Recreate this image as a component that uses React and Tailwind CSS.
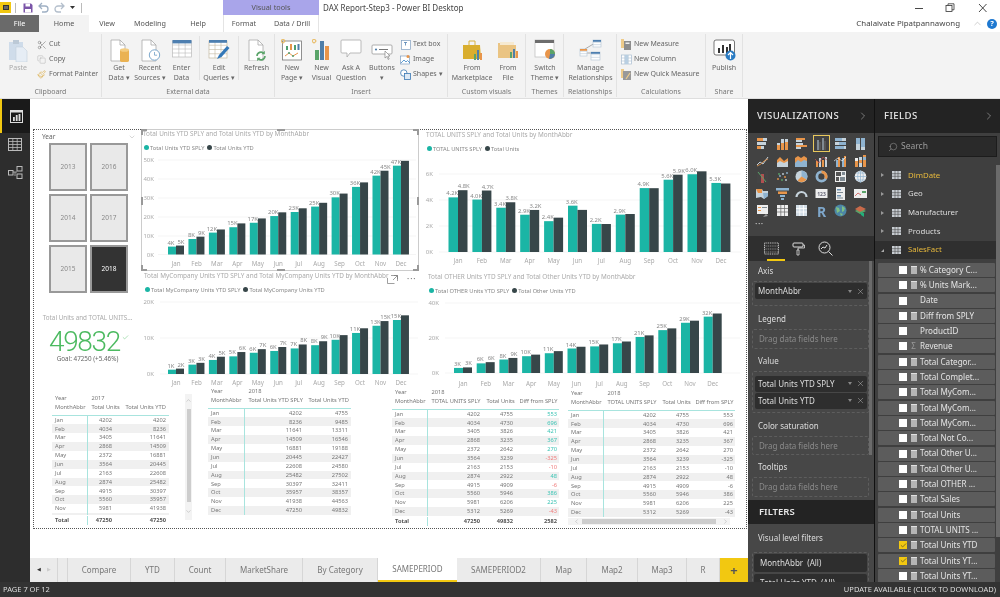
import React from "react";
import { Scissors, Copy, Paintbrush, X, ChevronRight, ChevronUp, ChevronDown, Search, Check } from "lucide-react";

const Svg = ({ w, h, vb, children, cls = "" }) => (
  <svg width={w} height={h} viewBox={vb || `0 0 ${w} ${h}`} className={`block shrink-0 ${cls}`}>{children}</svg>
);
const Sheet = () => (
  <>
    <path d="M2 1h9l5 5v16H2z" fill="#fff" stroke="#aaa" strokeWidth=".8" />
    <path d="M11 1v5h5" fill="none" stroke="#aaa" strokeWidth=".8" />
  </>
);
const Sun = ({ x = 0, y = 0 }) => (
  <g transform={`translate(${x} ${y})`}>
    <circle cx="3" cy="3" r="1.6" fill="none" stroke="#e8b85c" strokeWidth=".9" />
    <path d="M3 0v1M3 5v1M0 3h1M5 3h1M1 1l.6.6M4.4 4.4l.6.6M1 5l.6-.6M4.4 1.6L5 1" stroke="#e8b85c" strokeWidth=".6" />
  </g>
);
const Grid = ({ x, y, w, h, c = "#bbb", rows = 4, cols = 3 }) => (
  <g>
    <rect x={x} y={y} width={w} height={h} fill="#fff" stroke={c} strokeWidth=".7" />
    {Array.from({ length: rows - 1 }, (_, i) => (
      <path key={i} d={`M${x} ${y + ((i + 1) * h) / rows}h${w}`} stroke={c} strokeWidth=".6" />
    ))}
    {Array.from({ length: cols - 1 }, (_, i) => (
      <path key={i} d={`M${x + ((i + 1) * w) / cols} ${y}v${h}`} stroke={c} strokeWidth=".6" />
    ))}
  </g>
);

const RI = {
  paste: (
    <Svg w={20} h={23}>
      <rect x="1" y="3" width="14" height="18" fill="#cfdcea" />
      <rect x="5" y="1" width="6" height="4" fill="#bcc9d6" />
      <path d="M8 8h7l4 4v11H8z" fill="#e6edf5" stroke="#c5d0dc" strokeWidth=".6" />
    </Svg>
  ),
  getData: (
    <Svg w={21} h={23}>
      <Sheet />
      <rect x="11" y="11" width="9" height="11" fill="#eab252" />
      <ellipse cx="15.5" cy="11" rx="4.5" ry="1.8" fill="#f3cc80" />
      <ellipse cx="15.5" cy="22" rx="4.5" ry="1.2" fill="#eab252" />
    </Svg>
  ),
  recent: (
    <Svg w={21} h={23}>
      <Sheet />
      <circle cx="14.5" cy="16" r="5.2" fill="#fff" stroke="#6f9fc6" strokeWidth=".9" />
      <path d="M14.5 13v3.2h2.6" fill="none" stroke="#6f9fc6" strokeWidth=".8" />
    </Svg>
  ),
  enter: (
    <Svg w={20} h={19}>
      <Grid x={.5} y={2} w={19} h={16} />
      <rect x=".5" y="1" width="19" height="3.4" fill="#4e7fb0" />
    </Svg>
  ),
  edit: (
    <Svg w={22} h={22}>
      <Grid x={1} y={2} w={18} h={17} c="#c3b9a2" />
      <rect x="1" y="1" width="18" height="2.8" fill="#4e7fb0" />
      <path d="M9 20l2-4 8-9 2.5 2-8 9z" fill="#3478b8" />
    </Svg>
  ),
  refresh: (
    <Svg w={19} h={22}>
      <Sheet />
      <path d="M10 17a4 4 0 0 1 7-2.5M18 17a4 4 0 0 1-7 2.5" fill="none" stroke="#5aa469" strokeWidth="1.6" />
      <path d="M17.8 11.8v3.4h-3.4zM10.2 22.2v-3.4h3.4z" fill="#5aa469" />
    </Svg>
  ),
  newPage: (
    <Svg w={22} h={22}>
      <rect x="1.5" y="2" width="19" height="19" fill="#fff" stroke="#777" strokeWidth=".8" />
      <rect x="5" y="7" width="2" height="4" fill="#4f9e70" /><rect x="9" y="5" width="2" height="6" fill="#e8954a" /><rect x="13" y="6" width="2" height="5" fill="#4f9e70" /><rect x="16.5" y="5" width="2" height="6" fill="#4f7ea8" />
      <path d="M4 17l4-3 4 3 5-3" fill="none" stroke="#e8954a" strokeWidth="1" />
      <circle cx="8" cy="14" r="1" fill="#4f9e70" /><circle cx="12" cy="17" r="1" fill="#4f9e70" />
      <Sun x={-1} y={-1} />
    </Svg>
  ),
  newVisual: (
    <Svg w={19} h={22}>
      <rect x="3" y="11" width="4" height="10" fill="#5aa469" />
      <rect x="8" y="2" width="4" height="19" fill="#4f7ea8" />
      <rect x="13" y="7" width="4" height="14" fill="#e8954a" />
      <Sun x={-1} y={-1} />
    </Svg>
  ),
  ask: (
    <Svg w={22} h={20}>
      <path d="M2 1h18a1 1 0 0 1 1 1v11a1 1 0 0 1-1 1H10l-3 4v-4H2a1 1 0 0 1-1-1V2a1 1 0 0 1 1-1z" fill="#fff" stroke="#aaa" strokeWidth=".8" />
    </Svg>
  ),
  buttons: (
    <Svg w={22} h={16}>
      <rect x="1" y="1" width="20" height="9" rx="1" fill="#fff" stroke="#999" strokeWidth=".8" />
      <circle cx="5" cy="5.5" r="1.1" fill="#4f7ea8" />
      <path d="M8 5.5h9" stroke="#777" strokeWidth="1" />
      <path d="M14 7v7l1.8-1.5 1.4 3 1-.5-1.4-3H19z" fill="#fff" stroke="#777" strokeWidth=".6" />
    </Svg>
  ),
  market: (
    <Svg w={21} h={22}>
      <path d="M7 6V2h6v4" fill="none" stroke="#d9b23c" />
      <path d="M1 6h17l1 14H1z" fill="#d9ae2e" />
      <rect x="12" y="15" width="2" height="6" fill="#5aa469" /><rect x="15" y="11" width="2" height="10" fill="#4f7ea8" /><rect x="18" y="14" width="2" height="7" fill="#e8954a" />
    </Svg>
  ),
  folder: (
    <Svg w={22} h={20}>
      <path d="M1 4h7l2 2h9v13H1z" fill="#eac483" />
      <path d="M3 3h14v3H3z" fill="#f6ead2" />
      <rect x="13" y="13" width="2" height="6" fill="#5aa469" /><rect x="16" y="10" width="2" height="9" fill="#4f7ea8" /><rect x="19" y="12" width="2" height="7" fill="#e8954a" />
    </Svg>
  ),
  theme: (
    <Svg w={22} h={21}>
      <rect x="1" y="1" width="19" height="17" fill="#fff" stroke="#bbb" strokeWidth=".7" />
      <rect x="1" y="1" width="19" height="3" fill="#6d6d6d" />
      <circle cx="16" cy="15" r="5" fill="#e8954a" />
      <path d="M16 15V10a5 5 0 0 1 5 5z" fill="#5aa469" /><path d="M16 15h5a5 5 0 0 1-6 4.9z" fill="#4f7ea8" />
    </Svg>
  ),
  rel: (
    <Svg w={23} h={22}>
      <path d="M6 10L16 4M8 14h5l1 4" fill="none" stroke="#7a7a7a" strokeWidth=".6" />
      <Grid x={14} y={1} w={8} h={7} c="#b9c8d6" rows={3} cols={1} /><rect x="14" y="1" width="8" height="1.8" fill="#4e7fb0" />
      <Grid x={1} y={10} w={7} h={7} c="#b9c8d6" rows={3} cols={1} /><rect x="1" y="10" width="7" height="1.8" fill="#e8954a" />
      <Grid x={12} y={13} w={9} h={8} c="#b9c8d6" rows={3} cols={1} /><rect x="12" y="13" width="9" height="1.8" fill="#4e7fb0" />
    </Svg>
  ),
  publish: (
    <Svg w={23} h={22}>
      <rect x="1" y="1" width="20.5" height="15" rx="2" fill="#fff" stroke="#555" strokeWidth=".8" />
      <rect x="5" y="9" width="2" height="5" fill="#333" /><rect x="9" y="6" width="2" height="8" fill="#333" /><rect x="13" y="8" width="2" height="6" fill="#333" /><rect x="16" y="5" width="2" height="9" fill="#333" />
      <circle cx="17.5" cy="16.5" r="5" fill="#2a7cc4" />
      <path d="M17.5 20v-6M15 16l2.5-2.5L20 16" fill="none" stroke="#fff" strokeWidth="1.2" />
    </Svg>
  ),
  textbox: (
    <Svg w={10} h={10}>
      <rect x=".5" y=".5" width="9" height="9" fill="#fff" stroke="#7f9fc0" strokeWidth=".7" />
      <path d="M3 2.5h3M4.500 2.500v3" stroke="#4e7fb0" strokeWidth=".8" />
    </Svg>
  ),
  image: (
    <Svg w={11} h={11}>
      <rect x=".5" y="2" width="9" height="8" fill="#fff" stroke="#7f9fc0" strokeWidth=".7" />
      <path d="M1 9l3-3 2 2 1.500-1.500L10 9" fill="none" stroke="#3a86c8" strokeWidth=".8" />
      <circle cx="8" cy="2.500" r="1.500" fill="#e8954a" />
    </Svg>
  ),
  shapes: (
    <Svg w={11} h={11}>
      <circle cx="3.800" cy="4" r="3.200" fill="#fff" stroke="#3a78b4" strokeWidth=".8" />
      <rect x="4.500" y="4.500" width="6" height="6" fill="#dbe8f5" stroke="#3a78b4" strokeWidth=".8" />
    </Svg>
  ),
  measure: (
    <Svg w={11} h={11}>
      <rect x="0" y="0" width="3" height="9" fill="#eecb8a" /><rect x="3" y="2" width="7" height="9" fill="#8d8d8d" /><rect x="4.500" y="3.500" width="4" height="1.500" fill="#eee" />
    </Svg>
  ),
  column: (
    <Svg w={11} h={11}>
      <Grid x={.5} y={1} w={10} h={9} c="#a8bdd0" rows={3} cols={3} /><rect x="3.800" y="1" width="3.400" height="9" fill="#b9cfe2" />
    </Svg>
  ),
  quick: (
    <Svg w={11} h={11}>
      <rect x="0" y="0" width="3" height="9" fill="#eecb8a" /><rect x="2" y="2" width="8" height="9" fill="#999" /><path d="M5 10l4-6" stroke="#eecb8a" strokeWidth="1.200" />
    </Svg>
  ),
};

const Big = ({ w, icon, l1, l2 }) => (
  <div className={`${w} flex flex-col items-center shrink-0`}>
    <div className="h-[25px] pt-[1px] flex items-start justify-center">{icon}</div>
    <div className="text-[7px] leading-[10.300px] text-[#666] text-center whitespace-nowrap">{l1}</div>
    {l2 && <div className="text-[7px] leading-[10.300px] text-[#666] text-center whitespace-nowrap">{l2}</div>}
  </div>
);
const Small = ({ icon, text, tc = "text-[#666]" }) => (
  <div className="h-[15px] flex items-center gap-[2px]">
    <div className="w-[11px] flex justify-center">{icon}</div>
    <span className={`text-[7px] whitespace-nowrap ${tc}`}>{text}</span>
  </div>
);
const Group = ({ w, label, children }) => (
  <div className={`${w} h-[63px] mt-[2px] flex flex-col border-r border-[#e2e2e2] shrink-0`}>
    <div className="h-[53px] pt-[4px] flex">{children}</div>
    <div className="h-[10px] flex items-center justify-center text-[7px] text-[#777] whitespace-nowrap">{label}</div>
  </div>
);
const Sep = () => <div className="w-px h-[44px] -mt-[2px] bg-[#e2e2e2] shrink-0" />;

function TitleBar() {
  return (
    <div className="h-[15px] flex bg-white">
      <div className="w-[223px] flex items-center">
        <div className="w-[11px] h-[11px] bg-[#f2c811] flex items-center justify-center">
          <div className="w-[6px] h-[5px] border border-[#333] bg-[#666]" />
        </div>
        <div className="w-px h-[10px] bg-[#bbb] ml-[4px]" />
        <Svg w={10} h={10} cls="ml-[7px]">
          <path d="M.5.500h7.500l1.500 1.500v7.500H.5z" fill="#7b55a8" />
          <rect x="2.500" y=".5" width="4.500" height="3" fill="#fff" /><rect x="2" y="6" width="6" height="3.500" fill="#fff" />
        </Svg>
        <Svg w={11} h={11} cls="ml-[5px]">
          <path d="M4 1L1 4l3 3M1.500 4H7a3 3 0 0 1 0 6H4" fill="none" stroke="#9fb0c4" strokeWidth="1.300" />
        </Svg>
        <Svg w={11} h={11} cls="ml-[5px]">
          <path d="M7 1l3 3-3 3M9.500 4H4a3 3 0 0 0 0 6h3" fill="none" stroke="#b4bfcc" strokeWidth="1.300" />
        </Svg>
        <Svg w={5} h={3} cls="ml-[5px]"><path d="M0 0h5L2.500 3z" fill="#333" /></Svg>
        <div className="w-px h-[10px] bg-[#bbb] ml-[6px]" />
      </div>
      <div className="w-[96px] bg-[#a9a5ea] flex items-center justify-center text-[7.300px] text-[#555]">Visual tools</div>
      <div className="pl-[4px] text-[8px] text-[#444] flex items-center whitespace-nowrap">DAX Report-Step3 - Power BI Desktop</div>
      <div className="ml-auto flex items-center">
        <Svg w={32} h={10} vb="0 0 32 10" cls="-mr-[1px]"><path d="M11 5.500h8" stroke="#333" strokeWidth=".9" /></Svg>
        <Svg w={32} h={10}>
          <rect x="11" y="2.500" width="6" height="6" fill="#fff" stroke="#333" strokeWidth=".8" />
          <path d="M13 2.500V.8h6v6h-2" fill="none" stroke="#333" strokeWidth=".8" />
        </Svg>
        <Svg w={33} h={10}><path d="M12 1l7.500 8M19.500 1L12 9" stroke="#333" strokeWidth=".9" /></Svg>
      </div>
    </div>
  );
}

function TabRow() {
  const t = "h-full flex items-center justify-center text-[7.200px] text-[#555] shrink-0";
  return (
    <div className="h-[17px] flex bg-white">
      <div className={`${t} w-[39px] bg-[#6a6a6a] text-white`}>File</div>
      <div className={`${t} w-[50px] bg-[#f3f3f3] text-[#444]`}>Home</div>
      <div className={`${t} w-[36px]`}>View</div>
      <div className={`${t} w-[50px]`}>Modeling</div>
      <div className={`${t} w-[46px]`}>Help</div>
      <div className="ml-[2px] w-[96px] flex border-x border-[#e4e4e4] shrink-0">
        <div className={`${t} w-[40px]`}>Format</div>
        <div className={`${t} w-[56px]`}>Data / Drill</div>
      </div>
      <div className="ml-auto flex items-center">
        <span className="text-[7.900px] text-[#444] whitespace-nowrap">Chalaivate Pipatpannawong</span>
        <ChevronUp size={11} strokeWidth={1} color="#999" className="ml-[12px]" />
        <div className="ml-[4px] mr-[3px] w-[10px] h-[10px] rounded-full bg-[#1e78d0] text-white text-[7.500px] font-bold flex items-center justify-center">?</div>
      </div>
    </div>
  );
}

function Ribbon() {
  return (
    <div className="h-[67px] bg-[#f3f3f3] border-b border-[#dedede] flex">
      <Group w="w-[102px]" label="Clipboard">
        <Big w="w-[36px]" icon={RI.paste} l1={<span className="text-[#aaa]">Paste</span>} />
        <div className="pt-[0px] -mt-[1px]">
          <Small icon={<Scissors size={10} strokeWidth={1.2} color="#666" />} text="Cut" />
          <Small icon={<Copy size={9} strokeWidth={1.2} color="#aaa" />} text="Copy" />
          <Small icon={<Paintbrush size={9} strokeWidth={1.500} color="#d9a83a" />} text="Format Painter" />
        </div>
      </Group>
      <Group w="w-[173px]" label="External data">
        <Big w="w-[34px]" icon={RI.getData} l1="Get" l2="Data ▾" />
        <Big w="w-[28px]" icon={RI.recent} l1="Recent" l2="Sources ▾" />
        <Big w="w-[35px]" icon={RI.enter} l1="Enter" l2="Data" />
        <Sep />
        <Big w="w-[38px]" icon={RI.edit} l1="Edit" l2="Queries ▾" />
        <Sep />
        <Big w="w-[35px]" icon={RI.refresh} l1="Refresh" />
      </Group>
      <Group w="w-[173px]" label="Insert">
        <Big w="w-[34px]" icon={RI.newPage} l1="New" l2="Page ▾" />
        <Big w="w-[25px]" icon={RI.newVisual} l1="New" l2="Visual" />
        <Big w="w-[34px]" icon={RI.ask} l1="Ask A" l2="Question" />
        <Big w="w-[28px]" icon={<div className="pt-[5px]">{RI.buttons}</div>} l1="Buttons" l2="▾" />
        <div className="ml-[4px] -mt-[1px]">
          <Small icon={RI.textbox} text="Text box" />
          <Small icon={RI.image} text="Image" />
          <Small icon={RI.shapes} text="Shapes ▾" />
        </div>
      </Group>
      <Group w="w-[78px]" label="Custom visuals">
        <Big w="w-[48px]" icon={RI.market} l1="From" l2="Marketplace" />
        <Big w="w-[24px]" icon={RI.folder} l1="From" l2="File" />
      </Group>
      <Group w="w-[38px]" label="Themes">
        <Big w="w-[38px]" icon={RI.theme} l1="Switch" l2="Theme ▾" />
      </Group>
      <Group w="w-[53px]" label="Relationships">
        <Big w="w-[53px]" icon={RI.rel} l1="Manage" l2="Relationships" />
      </Group>
      <Group w="w-[89px]" label="Calculations">
        <div className="pl-[4px] -mt-[1px]">
          <Small icon={RI.measure} text="New Measure" />
          <Small icon={RI.column} text="New Column" />
          <Small icon={RI.quick} text="New Quick Measure" />
        </div>
      </Group>
      <Group w="w-[37px]" label="Share">
        <Big w="w-[36px]" icon={RI.publish} l1="Publish" />
      </Group>
    </div>
  );
}

function Rail() {
  return (
    <div className="w-[30px] bg-[#2d2d2d] flex flex-col items-center shrink-0">
      <div className="w-full h-[34px] bg-[#1a1a1a] border-l-[2px] border-[#f2c811] flex items-center justify-center">
        <Svg w={13} h={13}>
          <rect x=".5" y=".5" width="12" height="12" fill="none" stroke="#ddd" />
          <rect x="0" y="0" width="13" height="2.500" fill="#ddd" />
          <rect x="3" y="7" width="1.800" height="4" fill="#ddd" /><rect x="5.800" y="5" width="1.800" height="6" fill="#ddd" /><rect x="8.600" y="4" width="1.800" height="7" fill="#ddd" />
        </Svg>
      </div>
      <Svg w={14} h={13} cls="mt-[5px]" >
        <rect x=".5" y=".5" width="13" height="12" fill="none" stroke="#bbb" />
        <path d="M.5 3.500h13M.5 6.500h13M.5 9.500h13M4.800.5v12M9.200.5v12" stroke="#bbb" strokeWidth=".8" />
      </Svg>
      <Svg w={15} h={13} cls="mt-[15px]">
        <rect x=".5" y="4.500" width="4.500" height="4.500" fill="none" stroke="#bbb" />
        <rect x="9" y=".5" width="5" height="4.500" fill="none" stroke="#bbb" />
        <rect x="9" y="8" width="5" height="4.500" fill="none" stroke="#bbb" />
        <path d="M5 6h4M7 6v4" stroke="#bbb" strokeWidth=".8" fill="none" />
      </Svg>
    </div>
  );
}

const MONTHS = ["Jan", "Feb", "Mar", "Apr", "May", "Jun", "Jul", "Aug", "Sep", "Oct", "Nov", "Dec"];

function Chart({ cls, x, y, w, h, title, legend, ticks, base, scale, labelX, lineFrom, lineTo, first, step, bar, a, b, la, lb, monthY }) {
  const top = y + 25;
  return (
    <div className={`absolute ${cls} overflow-hidden flex flex-col`}>
      <div className="h-[10px] pl-[2px] flex items-center text-[6.400px] text-[#aaa] whitespace-nowrap">{title}</div>
      <div className="mt-[4px] h-[10px] pl-[3px] flex items-center gap-[3px] text-[5.700px] text-[#888] whitespace-nowrap">
        <span className="flex items-center gap-[1px]"><span className="w-[5px] h-[5px] rounded-full bg-[#1bb5a5]" />{legend[0]}</span>
        <span className="flex items-center gap-[1px]"><span className="w-[5px] h-[5px] rounded-full bg-[#374649]" />{legend[1]}</span>
      </div>
      <svg width={w} height={h - 25} viewBox={`${x} ${top} ${w} ${h - 25}`} className="block mt-[1px]" fontFamily="'Noto Sans',sans-serif">
        {ticks.map(([t, ty]) => (
          <g key={t}>
            <line x1={lineFrom} x2={lineTo} y1={ty} y2={ty} stroke="#f0f0f0" strokeWidth=".7" />
            <text x={labelX} y={ty + 2.200} textAnchor="end" fontSize="6" fill="#aaa">{t}</text>
          </g>
        ))}
        {MONTHS.map((m, i) => {
          const c = first + step * i;
          const ha = a[i] * scale;
          const hb = b[i] * scale;
          return (
            <g key={m}>
              <rect x={c - bar} y={base - ha} width={bar} height={ha} fill="#1bb5a5" />
              <rect x={c} y={base - hb} width={bar} height={hb} fill="#374649" />
              <text x={c} y={monthY + 2.200} textAnchor="middle" fontSize="6.200" fill="#aaa">{m}</text>
              {la[i] && <text x={c - bar / 2 - 1} y={base - ha - 2} textAnchor="middle" fontSize="5.900" fill="#888">{la[i]}</text>}
              {lb[i] && <text x={c + bar / 2 + 1} y={base - hb - 2} textAnchor="middle" fontSize="5.900" fill="#888">{lb[i]}</text>}
            </g>
          );
        })}
      </svg>
    </div>
  );
}

function Table({ cls, cols, pads, heads, year, rows, total, bodyH, diff }) {
  return (
    <div className={`absolute ${cls} text-[5.700px] text-[#777]`}>
      <div className="h-[9px] flex items-center">
        <div className={`${cols[0]} pl-[3px]`}>Year</div>
        <div className="pl-[3.500px]">{year}</div>
      </div>
      <div className="h-[9px] flex items-center whitespace-nowrap">
        <div className={`${cols[0]} pl-[3px]`}>MonthAbbr</div>
        {heads.map((hd, i) => <div key={hd} className={`${cols[i + 1]} pl-[3.500px]`}>{hd}</div>)}
      </div>
      <div className="mt-[2.500px] border-t border-[#a8e4de]" />
      <div className={`${bodyH} overflow-hidden`}>
        {rows.map((r, i) => (
          <div key={r[0]} className={`h-[8.860px] flex items-center ${i % 2 ? "bg-[#f0f0f0]" : ""}`}>
            <div className={`${cols[0]} h-full pl-[3px] flex items-center border-r border-[#a8e4de]`}>{r[0]}</div>
            {r.slice(1).map((v, j) => (
              <div
                key={j}
                className={`${cols[j + 1]} ${pads[j]} text-right ${diff && j === 2 ? (v < 0 ? "text-[#f07b7b]" : "text-[#3cc4b4]") : ""}`}
              >
                {v}
              </div>
            ))}
          </div>
        ))}
      </div>
      {total && (
        <div className="h-[9px] flex items-center font-bold text-[#555] mt-[1px]">
          <div className={`${cols[0]} h-full pl-[3px] flex items-center border-r border-[#a8e4de]`}>Total</div>
          {total.map((v, j) => <div key={j} className={`${cols[j + 1]} ${pads[j]} text-right`}>{v}</div>)}
        </div>
      )}
    </div>
  );
}

const Handle = ({ cls }) => <div className={`absolute bg-[#999] ${cls}`} />;

const sply = [4202, 4034, 3405, 2868, 2372, 3564, 2163, 2874, 4915, 5560, 5981, 5312];
const tot = [4755, 4730, 3826, 3235, 2642, 3239, 2153, 2922, 4909, 5946, 6206, 5269];
const ytd17 = [4202, 8236, 11641, 14509, 16881, 20445, 22608, 25482, 30397, 35957, 41938, 47250];
const ytd18 = [4755, 9485, 13311, 16546, 19188, 22427, 24580, 27502, 32411, 38357, 44563, 49832];
const dif = [553, 696, 421, 367, 270, -325, -10, 48, -6, 386, 225, -43];
const N = (s) => s.split(" ").map((v) => (v === "_" ? null : v));

function Canvas() {
  const t3 = MONTHS.map((m, i) => [m, sply[i], tot[i], dif[i]]);
  return (
    <div className="flex-1 relative bg-white overflow-hidden">
      <div className="absolute left-[3px] top-[30px] w-[714px] h-[400px] border border-dotted border-[#555]" />

      <div className="absolute left-[12px] top-[32px] w-[96px]">
        <div className="h-[12px] flex items-center justify-between pr-[2px] text-[6.500px] text-[#666]">
          Year <ChevronDown size={8} strokeWidth={1} color="#888" />
        </div>
        <div className="pl-[7px] grid grid-cols-[38px_38px] auto-rows-[48px] gap-[3px]">
          {["2013", "2016", "2014", "2017", "2015", "2018"].map((yr) => (
            <div
              key={yr}
              className={`border-2 border-[#999] flex items-center justify-center text-[6.500px] ${yr === "2018" ? "bg-[#333] text-white border-[#555]" : "bg-[#e9e9e9] text-[#888]"}`}
            >
              {yr}
            </div>
          ))}
        </div>
      </div>

      <Chart
        cls="left-[111px] top-[30px] w-[278px] h-[142px]" x={141} y={129} w={278} h={142}
        title="Total Units YTD SPLY and Total Units YTD by MonthAbbr"
        legend={["Total Units YTD SPLY", "Total Units YTD"]}
        ticks={[["50K", 160], ["40K", 179], ["30K", 198], ["20K", 217], ["10K", 236], ["0K", 254.500]]}
        base={254.500} scale={0.00188} labelX={154} lineFrom={158} lineTo={416} first={176} step={20.450} bar={8}
        a={ytd17} b={ytd18} monthY={264}
        la={N("4K 8K 12K 15K 17K 20K 23K 25K 30K 36K 42K 47K")} lb={N("5K 9K _ _ _ _ _ _ _ _ 45K _")}
      />
      <Chart
        cls="left-[394px] top-[31px] w-[322px] h-[140px]" x={424} y={130} w={322} h={140}
        title="TOTAL UNITS SPLY and Total Units by MonthAbbr"
        legend={["TOTAL UNITS SPLY", "Total Units"]}
        ticks={[["6K", 174], ["4K", 200], ["2K", 226], ["0K", 252]]}
        base={252} scale={0.013} labelX={433} lineFrom={439} lineTo={741} first={458} step={23.900} bar={9.500}
        a={sply} b={tot} monthY={261}
        la={N("4.2K 4.0K 3.4K 2.9K 2.4K 3.6K 2.2K 2.9K 4.9K 5.6K 6.0K 5.3K")} lb={N("4.8K 4.7K 3.8K 3.2K _ _ _ _ _ 5.9K _ _")}
      />
      <Chart
        cls="left-[112px] top-[172px] w-[278px] h-[121px]" x={142} y={271} w={278} h={121}
        title="Total MyCompany Units YTD SPLY and Total MyCompany Units YTD by MonthAbbr"
        legend={["Total MyCompany Units YTD SPLY", "Total MyCompany Units YTD"]}
        ticks={[["20K", 302], ["10K", 338], ["0K", 374]]}
        base={374} scale={3.600} labelX={154} lineFrom={160} lineTo={418} first={176} step={20.450} bar={8}
        a={[1.2, 2.6, 3.9, 4.9, 5.9, 6.4, 7.1, 8, 9.5, 11.4, 13.4, 15]}
        b={[1.5, 3.1, 4.8, 6.1, 6.9, 7.5, 8.2, 9.1, 10.8, 12.7, 14.7, 16.3]} monthY={383}
        la={N("1K 3K 4K 5K 6K 6K 7K 8K 10K 11K 13K 15K")} lb={N("2K 3K 5K 6K 7K 7K 8K 9K _ _ 15K _")}
      />
      <Chart
        cls="left-[396px] top-[173px] w-[320px] h-[120px]" x={426} y={272} w={320} h={120}
        title="Total OTHER Units YTD SPLY and Total Other Units YTD by MonthAbbr"
        legend={["Total OTHER Units YTD SPLY", "Total Other Units YTD"]}
        ticks={[["40K", 303], ["20K", 338], ["0K", 373]]}
        base={373} scale={1.750} labelX={439} lineFrom={445} lineTo={740} first={463} step={22.700} bar={9}
        a={[2.9, 5.5, 7.7, 9.6, 11.3, 14, 15.2, 17, 20.6, 24.5, 28.7, 32.2]}
        b={[3.2, 6.2, 8.6, 10.5, 12.5, 15, 16.3, 18, 21.5, 25.5, 29.9, 34]} monthY={384}
        la={N("3K 6K 8K 10K 11K 14K 15K 17K 21K 25K 29K 32K")} lb={N("3K 6K 9K _ _ _ _ _ _ _ _ _")}
      />

      <div className="absolute left-[111px] top-[30px] w-[278px] h-[142px] border border-[#ccc]">
        <Handle cls="-left-px -top-px w-[6px] h-[2px]" /><Handle cls="-left-px -top-px w-[2px] h-[6px]" />
        <Handle cls="-right-px -top-px w-[6px] h-[2px]" /><Handle cls="-right-px -top-px w-[2px] h-[6px]" />
        <Handle cls="-left-px -bottom-px w-[6px] h-[2px]" /><Handle cls="-left-px -bottom-px w-[2px] h-[6px]" />
        <Handle cls="-right-px -bottom-px w-[6px] h-[2px]" /><Handle cls="-right-px -bottom-px w-[2px] h-[6px]" />
        <Handle cls="left-[135px] -top-px w-[8px] h-[2px]" /><Handle cls="left-[135px] -bottom-px w-[8px] h-[2px]" />
        <Handle cls="-left-px top-[67px] w-[2px] h-[8px]" /><Handle cls="-right-px top-[67px] w-[2px] h-[8px]" />
      </div>
      <Svg w={11} h={9} cls="absolute left-[357px] top-[176px]">
        <path d="M.5 3v5.500h7M10.500 6V.5H4M6 5l4-4M7 .5h3.500V4" fill="none" stroke="#777" strokeWidth=".7" />
      </Svg>
      <div className="absolute left-[377px] top-[176px] text-[8px] leading-[8px] text-[#666] tracking-[1px]">···</div>

      <div className="absolute left-[10px] top-[214px] w-[95px] flex flex-col items-center">
        <div className="text-[6.300px] leading-[10px] text-[#aaa] whitespace-nowrap">Total Units and TOTAL UNITS...</div>
        <div className="flex items-start h-[26px] mt-[5px] ml-[3px] font-['Roboto',sans-serif] font-light text-[28px] leading-[27px] tracking-[-1.300px] text-[#4cba60]">
          49832
          <Check size={7} strokeWidth={1.500} color="#4cba60" className="mt-[6px] ml-[2px]" />
        </div>
        <div className="text-[6.300px] leading-[9px] text-[#666] whitespace-nowrap">Goal: 47250 (+5.46%)</div>
      </div>

      <Table
        cls="left-[22px] top-[295px] w-[117px]" cols={["w-[36px]", "w-[34px]", "w-[47px]"]} pads={["pr-[10px]", "pr-[3px]"]}
        heads={["Total Units", "Total Units YTD"]} year="2017" bodyH="h-[99px]"
        rows={MONTHS.map((m, i) => [m, sply[i], ytd17[i]])} total={["47250", "47250"]}
      />
      <div className="absolute left-[155px] top-[295px] w-[7px] h-[126px] bg-[#f3f3f3] flex flex-col items-center">
        <ChevronUp size={7} strokeWidth={1} color="#777" className="shrink-0 mt-[3px]" />
        <div className="w-[4px] h-[93px] mt-[5px] bg-[#cdcdcd]" />
        <ChevronDown size={7} strokeWidth={1} color="#777" className="shrink-0 mt-[6px]" />
      </div>
      <Table
        cls="left-[178px] top-[288px] w-[143px]" cols={["w-[37px]", "w-[60px]", "w-[46px]"]} pads={["pr-[3px]", "pr-[3px]"]}
        heads={["Total Units YTD SPLY", "Total Units YTD"]} year="2018" bodyH="h-[107px]"
        rows={MONTHS.map((m, i) => [m, ytd17[i], ytd18[i]])}
      />
      <Table
        cls="left-[362px] top-[289px] w-[167px]" cols={["w-[36px]", "w-[55px]", "w-[33px]", "w-[43px]"]} pads={["pr-[3px]", "pr-[3px]", "pr-[2px]"]}
        heads={["TOTAL UNITS SPLY", "Total Units", "Diff from SPLY"]} year="2018" bodyH="h-[106.400px]" diff
        rows={t3} total={["47250", "49832", "2582"]}
      />
      <Table
        cls="left-[538px] top-[290px] w-[167px]" cols={["w-[36px]", "w-[55px]", "w-[33px]", "w-[43px]"]} pads={["pr-[3px]", "pr-[3px]", "pr-[2px]"]}
        heads={["TOTAL UNITS SPLY", "Total Units", "Diff from SPLY"]} year="2018" bodyH="h-[106.400px]"
        rows={t3}
      />
      <div className="absolute left-[538px] top-[419px] w-[162px] h-[7px] bg-[#f3f3f3] flex items-center">
        <ChevronRight size={7} strokeWidth={1} color="#777" className="rotate-180 shrink-0 ml-[5px]" />
        <div className="h-[5px] w-[134px] ml-[2px] bg-[#cdcdcd]" />
        <ChevronRight size={7} strokeWidth={1} color="#777" className="shrink-0 ml-[6px]" />
      </div>
    </div>
  );
}

function PageTabs() {
  const tabs = [
    ["Compare", "w-[63px]"], ["YTD", "w-[44px]"], ["Count", "w-[51px]"], ["MarketShare", "w-[77px]"], ["By Category", "w-[75px]"],
    ["SAMEPERIOD", "w-[79px]"], ["SAMEPERIOD2", "w-[84px]"], ["Map", "w-[46px]"], ["Map2", "w-[51px]"], ["Map3", "w-[49px]"], ["R", "w-[33px]"],
  ];
  return (
    <div className="h-[24px] bg-[#ebebeb] flex shrink-0">
      <div className="w-[27px] flex items-center justify-center gap-[6px] text-[5px] text-[#333]">
        <span>◀</span><span className="text-[#ccc]">▶</span>
      </div>
      <div className="w-[11px] border-x border-[#d6d6d6]" />
      {tabs.map(([t, w]) => (
        <div
          key={t}
          className={`${w} flex items-center justify-center text-[8px] text-[#777] whitespace-nowrap ${t === "SAMEPERIOD" ? "bg-white border-b-2 border-[#f2c811] text-[#555]" : "border-r border-[#d6d6d6]"}`}
        >
          {t}
        </div>
      ))}
      <div className="w-[28px] bg-[#f2c811] flex items-center justify-center text-[#555] text-[13px] font-bold leading-none">+</div>
    </div>
  );
}

const O = "#e8954a", L = "#c6d3dc", W = "#eeeeee", D = "#7f8a92", B = "#8fb3d0", T = "#5aa469";
const rr = (list) => list.map(([x, y, w, h, c], i) => <rect key={i} x={x} y={y} width={w} height={h} fill={c} />);
const VI = [
  rr([[1, 1, 6, 3, O], [7, 1, 4, 3, L], [1, 5, 9, 3, L], [1, 9, 4, 3, O], [5, 9, 3, 3, L]]),
  rr([[1, 6, 3, 7, L], [1, 8, 3, 5, O], [5, 2, 3, 11, O], [5, 2, 3, 4, L], [9, 5, 3, 8, O], [9, 2, 3, 3, L]]),
  rr([[1, 1, 9, 2, O], [1, 3, 6, 2, L], [1, 6, 7, 2, L], [1, 8, 11, 2, O], [1, 10, 5, 2, L]]),
  rr([[2, 3, 2, 10, D], [4, 5, 2, 8, "#555"], [7, 1, 2, 12, D], [9, 4, 2, 9, "#555"]]),
  rr([[1, 1, 7, 3, B], [8, 1, 4, 3, L], [1, 5, 4, 3, L], [5, 5, 7, 3, B], [1, 9, 9, 3, B], [10, 9, 2, 3, L]]),
  rr([[2, 1, 4, 6, B], [2, 7, 4, 6, L], [7, 1, 4, 9, B], [7, 10, 4, 3, L]]),
  <><path d="M1 11l3-3 3 2 5-7" fill="none" stroke={L} strokeWidth="1" /><path d="M1 12l4-2 3-3 4-2" fill="none" stroke={O} strokeWidth=".8" /></>,
  <><path d="M1 13V6l3-3 4 4 4-3v9z" fill={O} /><path d="M1 13V9l3-2 4 2 4-2v6z" fill={L} /></>,
  <><path d="M0 13V7l3-2 3 2 3-3 3 2v7z" fill={B} /><path d="M0 9V4l3-2 3 2 3-2 3 2v3l-3-1-3 2-3-2z" fill={O} /></>,
  <>{rr([[1, 7, 2, 6, O], [4, 4, 2, 9, L], [7, 6, 2, 7, O], [10, 3, 2, 10, L]])}<path d="M0 5l4 4 4-6 4 3" fill="none" stroke="#c95050" strokeWidth=".7" /></>,
  <>{rr([[2, 6, 2, 7, B], [4, 3, 2, 10, O], [8, 4, 2, 9, B], [10, 2, 2, 11, O]])}<path d="M0 7l4-3 4 3 4-4" fill="none" stroke={W} strokeWidth=".7" /></>,
  rr([[1, 4, 3, 9, O], [1, 4, 3, 3, W], [5, 3, 3, 10, L], [5, 6, 3, 3, O], [9, 1, 3, 12, O], [9, 3, 3, 3, B]]),
  <>{rr([[1, 1, 3, 12, "#444"], [5, 4, 3, 9, "#b05050"], [9, 1, 3, 12, "#444"]])}<path d="M2 2l4 5 4 5" stroke={T} fill="none" /></>,
  <>{[[2, 9, O], [4, 6, B], [6, 10, T], [7, 4, L], [9, 7, O], [11, 3, B], [3, 4, T], [10, 10, L]].map(([x, y, c], i) => <circle key={i} cx={x} cy={y} r=".9" fill={c} />)}</>,
  <><circle cx="6.500" cy="6.500" r="6" fill={L} /><path d="M6.500 6.500V.5a6 6 0 0 1 5 9z" fill={B} /><path d="M6.500 6.500l5 3a6 6 0 0 1-9 1z" fill={O} /></>,
  <><circle cx="6.500" cy="6.500" r="4.600" fill="none" stroke={B} strokeWidth="2.800" /><path d="M6.500 1.900a4.600 4.600 0 0 1 4 6.800" fill="none" stroke={O} strokeWidth="2.800" /></>,
  rr([[1, 1, 11, 11, W], [2, 2, 5, 4, "#555"], [8, 2, 3, 3, D], [2, 7, 3, 4, "#555"], [6, 7, 5, 4, D]]),
  <><circle cx="6.500" cy="6.500" r="5.800" fill={W} /><path d="M.7 6.500h11.600M6.500.7v11.600M2 3h9M2 10h9" stroke={B} strokeWidth=".7" /><ellipse cx="6.500" cy="6.500" rx="2.800" ry="5.800" fill="none" stroke={B} strokeWidth=".7" /></>,
  <><path d="M0 2h6l1 2h5v5l-4 3-3-2-5 1z" fill={L} /><path d="M0 2h6v4H2z" fill={O} /><path d="M7 6h5v3l-4 3z" fill={B} /></>,
  rr([[0, 1, 13, 2.500, B], [2, 4.500, 9, 2.500, O], [4, 8, 5, 2, B], [5, 11, 3, 2, B]]),
  <path d="M1.500 10a5 5 0 0 1 10 0" fill="none" stroke={L} strokeWidth="2.200" />,
  <><rect x=".5" y="2" width="12" height="9" fill={W} /><text x="6.500" y="8.800" textAnchor="middle" fontSize="5" fontWeight="700" fill="#667">123</text></>,
  <>{rr([[2, 0, 9, 13, W], [3, 2, 4, 1.500, "#6b8fb0"], [3, 5, 6, 1, D], [3, 8, 4, 1.500, "#6b8fb0"], [3, 10.500, 6, 1, D]])}</>,
  <>{rr([[0, 2, 13, 9, W]])}<path d="M1 9l3-3 3 2" stroke="#c95050" fill="none" strokeWidth=".8" />{rr([[8, 4, 4, 2, T]])}</>,
  <>{rr([[1, 1, 11, 9, W], [2, 3, 3, 1, O], [6, 3, 5, 1, D], [2, 6, 3, 1, O]])}<path d="M7 13l3-3 2 2z" fill="#999" /></>,
  <>{rr([[1, 1, 11, 11, W]])}<path d="M1 4.500h11M1 8h11M4.800 1v11M8.500 1v11" stroke="#666" strokeWidth=".7" /></>,
  <>{rr([[1, 1, 11, 11, "#d2dde6"]])}<path d="M1 4.500h11M1 8h11M4.800 1v11M8.500 1v11" stroke="#fff" strokeWidth=".8" /></>,
  <text x="6.500" y="12.500" textAnchor="middle" fontSize="14" fontWeight="700" fill="#7ea6ca">R</text>,
  <><circle cx="6.500" cy="6.500" r="6" fill="#4c86a6" /><path d="M2 3l3 1 1 3-3 2zM8 2l3 2-1 3-2 1zM6 9l3 1-2 2z" fill="#7fbf84" /></>,
  <><path d="M1 7l5-3 6 3-6 3z" fill="#5aa469" /><path d="M1 5l5-3 6 3-6 3z" fill="#c96a4a" /><path d="M6 8l4 1v4l-3-2z" fill="#22b07a" /></>,
];

function Head({ children }) {
  return (
    <div className="h-[34px] bg-[#232323] flex items-center shrink-0">
      <span className="pl-[9px] text-[9.600px] font-medium tracking-[.4px] text-[#e8e8e8] whitespace-nowrap">{children}</span>
      <ChevronRight size={12} strokeWidth={1} color="#ccc" className="ml-auto mr-[5px]" />
    </div>
  );
}
const Well = ({ children }) => (
  <div className="h-[16px] mx-[1px] bg-[#2e2e2e] rounded-[2px] flex items-center pl-[3px] pr-[2px] text-[8px] text-[#ddd] whitespace-nowrap">
    <span className="flex-1">{children}</span>
    <span className="w-0 h-0 border-x-[2.500px] border-t-[3px] border-x-transparent border-t-[#888] mr-[4px]" />
    <X size={9} strokeWidth={1} color="#ddd" />
  </div>
);
const Section = ({ label, h, top, children }) => (
  <div className={top}>
    <div className="h-[20px] flex items-center pl-[6px] text-[8px] text-[#ddd]">{label}</div>
    <div className={`${h} mr-[1px] border border-dashed border-[#5d5d5d] rounded-[2px] flex flex-col justify-center gap-[1px] text-[8px] text-[#8a8a8a] pl-[1px]`}>
      {children || <span className="pl-[5px]">Drag data fields here</span>}
    </div>
  </div>
);

function VizPanel() {
  return (
    <div className="w-[127px] flex flex-col shrink-0 border-r border-[#111] overflow-hidden">
      <Head>VISUALIZATIONS</Head>
      <div className="h-[103px] bg-[#424242] pt-[2px] pl-[5px] shrink-0">
        <div className="grid grid-cols-[repeat(6,19.500px)] auto-rows-[16.700px]">
          {VI.map((ic, i) => (
            <div key={i} className="flex items-center justify-center">
              <div className={`flex ${i === 3 ? "outline outline-[#e8c85c] outline-offset-[1.500px]" : ""}`}>
                <Svg w={13} h={13} vb="0 0 13 13">{ic}</Svg>
              </div>
            </div>
          ))}
        </div>
        <div className="pl-[2px] mt-[2px] text-[#ccc] text-[9px] leading-[8px] tracking-[.5px]">···</div>
      </div>
      <div className="h-[25px] bg-[#2f2f2f] flex items-center shrink-0 relative">
        <Svg w={15} h={13} cls="ml-[16px]">
          <rect x=".5" y="1" width="14" height="11" fill="none" stroke="#ccc" strokeDasharray="1 .8" />
          <path d="M.5 4h14M.5 7h14M.5 10h14" stroke="#ccc" strokeWidth=".6" strokeDasharray="1 .8" />
        </Svg>
        <Svg w={13} h={14} cls="ml-[13px]">
          <rect x="1" y="1" width="10" height="4" rx="1" fill="none" stroke="#ddd" />
          <path d="M11 3h1.500v3H6v2M5 8h2v5H5z" fill="none" stroke="#ddd" strokeWidth=".8" />
        </Svg>
        <Svg w={15} h={15} cls="ml-[13px]">
          <circle cx="6.500" cy="6.500" r="5.500" fill="none" stroke="#ddd" />
          <path d="M10.500 10.500l4 4M3 8l2-2 2 1 2-3" stroke="#ddd" fill="none" />
        </Svg>
        <div className="absolute left-[19px] bottom-0 w-[18px] h-[2px] bg-[#f2c811]" />
      </div>
      <div className="flex-1 bg-[#474747] flex overflow-hidden">
        <div className="w-[122px] pl-[4px] shrink-0">
          <div>
            <div className="h-[20px] flex items-center pl-[6px] text-[8px] text-[#ddd]">Axis</div>
            <div className="h-[25px] mr-[1px] border border-dashed border-[#5d5d5d] rounded-[2px] pt-[1px] pl-[1px]"><Well>MonthAbbr</Well></div>
          </div>
          <Section top="mt-[3px]" label="Legend" h="h-[20px]" />
          <Section top="mt-[2px]" label="Value" h="h-[42px]">
            <Well>Total Units YTD SPLY</Well>
            <Well>Total Units YTD</Well>
          </Section>
          <Section top="mt-[3px]" label="Color saturation" h="h-[19px]" />
          <Section top="mt-[2px]" label="Tooltips" h="h-[20px]" />
        </div>
        <div className="w-[3px] h-[194px] bg-[#6b6b6b] ml-[-1px]" />
      </div>
      <div className="h-[24px] bg-[#232323] shrink-0 flex items-center pl-[11px] text-[9.500px] font-semibold text-[#e8e8e8]">FILTERS</div>
      <div className="h-[58px] bg-[#474747] shrink-0 overflow-hidden pl-[4px] pr-[5px]">
        <div className="h-[28px] flex items-center pl-[6px] text-[8px] text-[#ddd]">Visual level filters</div>
        <div className="border border-dashed border-[#5d5d5d] rounded-[2px] h-[40px] p-[1px]">
          <div className="h-[18px] bg-[#2e2e2e] rounded-[2px] flex items-center pl-[6px] text-[8px] text-[#ddd]">MonthAbbr&nbsp; (All)</div>
          <div className="h-[18px] mt-[2px] bg-[#2e2e2e] rounded-[2px] flex items-center pl-[6px] text-[8px] text-[#ddd]">Total Units YTD&nbsp; (All)</div>
        </div>
      </div>
    </div>
  );
}

const TableIcon = () => (
  <Svg w={9} h={8}>
    <rect width="9" height="8" fill="#c9ced3" />
    <path d="M0 2.700h9M0 5.300h9M3 0v8M6 0v8" stroke="#4a4a4a" strokeWidth=".6" />
  </Svg>
);
const FIELDS = [
  ["% Category C...", "c"], ["% Units Mark...", "c"], ["Date", ""], ["Diff from SPLY", "c"], ["ProductID", ""], ["Revenue", "s"],
  ["Total Categor...", "c"], ["Total Complet...", "c"], ["Total MyCom...", "c"], ["Total MyCom...", "c"], ["Total MyCom...", "c"], ["Total Not Co...", "c"],
  ["Total Other U...", "c"], ["Total Other U...", "c"], ["Total OTHER ...", "c"], ["Total Sales", "c"], ["Total Units", "c"], ["TOTAL UNITS ...", "c"],
  ["Total Units YTD", "c", 1], ["Total Units YT...", "c", 1], ["Total Units YT...", "c"],
];
function FieldsPanel() {
  return (
    <div className="flex-1 flex flex-col overflow-hidden relative bg-[#3f3f3f]">
      <Head>FIELDS</Head>
      <div className="h-[33px] pl-[3px] pt-[3px] shrink-0">
        <div className="w-[119px] h-[21px] bg-[#2a2a2a] border border-[#1c1c1c] flex items-center pl-[9px] gap-[3px] text-[8.500px] text-[#9a9a9a]">
          <Search size={10} strokeWidth={1} color="#bbb" className="-scale-x-100" /> Search
        </div>
      </div>
      {["DimDate", "Geo", "Manufacturer", "Products", "SalesFact"].map((t, i) => (
        <div key={t} className={`h-[18.700px] flex items-center shrink-0 pl-[6px] text-[7.800px] ${i === 4 ? "bg-[#2f2f2f]" : ""} ${i === 0 || i === 4 ? "text-[#e8b93c]" : "text-[#ddd]"}`}>
          {i === 4 ? (
            <span className="w-0 h-0 border-l-[3px] border-b-[3px] border-l-transparent border-b-[#aaa] mr-[8px]" />
          ) : (
            <span className="w-0 h-0 border-y-[2.500px] border-l-[3px] border-y-transparent border-l-[#999] mr-[8px]" />
          )}
          <TableIcon />
          <span className="ml-[7px]">{t}</span>
        </div>
      ))}
      <div className="pl-[3px] pt-[3.500px] flex flex-col gap-[1.300px]">
        {FIELDS.map(([t, k, on], i) => (
          <div key={i} className="w-[117px] h-[14px] shrink-0 bg-[#5c5c5c] rounded-[1px] flex items-center pl-[21px] text-[8.100px] text-[#e4e4e4] whitespace-nowrap">
            <span className={`w-[8px] h-[8px] flex items-center justify-center ${on ? "bg-[#f2c811]" : "bg-white"}`}>
              {on ? <Check size={7} strokeWidth={2} color="#333" /> : null}
            </span>
            <span className="w-[13px] flex justify-center">
              {k === "c" && <span className="w-[6px] h-[8px] bg-[#b5b5b5] border-t border-[#e0e0e0]" />}
              {k === "s" && <span className="text-[8px] text-[#999] leading-none">Σ</span>}
            </span>
            {t}
          </div>
        ))}
      </div>
      <div className="absolute right-0 top-[66px] w-[4px] h-[372px] bg-[#6b6b6b]" />
    </div>
  );
}

export default function App() {
  return (
    <div className="w-[1000px] h-[597px] flex flex-col overflow-hidden bg-white font-['Noto_Sans',sans-serif] blur-[0.4px]">
      <TitleBar />
      <TabRow />
      <Ribbon />
      <div className="h-[483px] flex overflow-hidden">
        <Rail />
        <div className="w-[718px] flex flex-col shrink-0">
          <Canvas />
          <PageTabs />
        </div>
        <VizPanel />
        <FieldsPanel />
      </div>
      <div className="h-[15px] bg-[#333] flex items-center justify-between pl-[3px] pr-[4px] text-[7.500px] text-[#ddd] shrink-0">
        <span>PAGE 7 OF 12</span>
        <span>UPDATE AVAILABLE (CLICK TO DOWNLOAD)</span>
      </div>
    </div>
  );
}
